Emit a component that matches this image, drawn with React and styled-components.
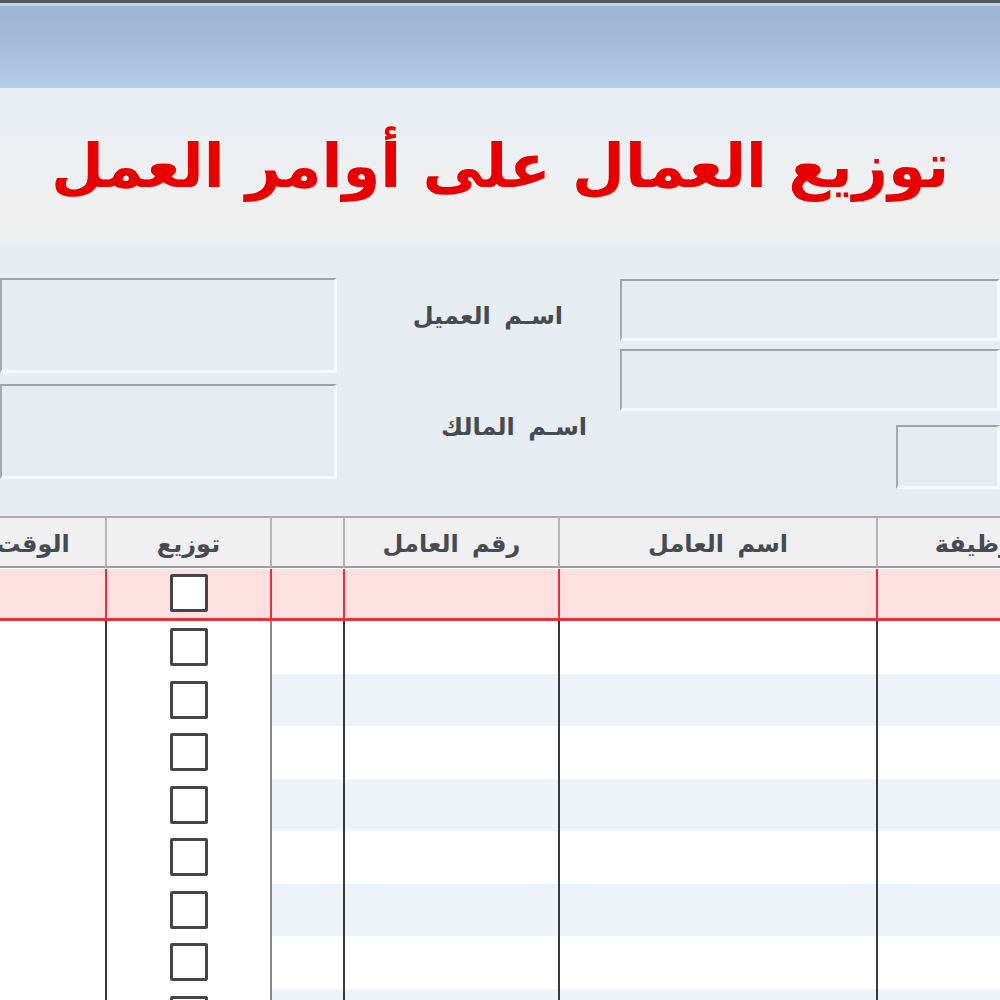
import React from "react";
import styled, { createGlobalStyle } from "styled-components";

const GlobalStyle = createGlobalStyle`
  html, body {
    margin: 0;
    padding: 0;
    background: #ffffff;
  }
  body {
    font-family: "DejaVu Sans", "Noto Sans", sans-serif;
  }
`;

const Frame = styled.div`
  width: 1000px;
  height: 1000px;
  overflow: hidden;
  display: flex;
  flex-direction: column;
  background: #ffffff;
`;

const TopBar = styled.div`
  height: 85px;
  flex-shrink: 0;
  border-top: 3px solid #4b5a5b;
  box-shadow: inset 0 3px 0 #c9d5dd;
  background: linear-gradient(180deg, #9eb3d6 0%, #a2bad4 45%, #b5cde8 100%);
`;

const TitleArea = styled.div`
  height: 162px;
  flex-shrink: 0;
  display: flex;
  align-items: center;
  justify-content: center;
  padding-bottom: 8px;
  box-sizing: border-box;
  background: linear-gradient(180deg, #e7eef4 0%, #f0f0f0 70%, #f0f0f0 88%, #e4eff0 100%);
`;

const Title = styled.h1`
  margin: 0;
  direction: rtl;
  font-family: "DejaVu Sans", sans-serif;
  font-weight: bold;
  font-size: 61px;
  color: #e80000;
  white-space: nowrap;
`;

const Form = styled.div`
  height: 266px;
  flex-shrink: 0;
  display: grid;
  grid-template-columns: 337px 283px 1fr;
  background: #e6edf3;
  direction: ltr;
`;

const Column = styled.div`
  display: flex;
  flex-direction: column;
  gap: ${(p) => p.$gap || 0}px;
  padding-top: ${(p) => p.$top || 0}px;
`;

const Field = styled.div`
  height: ${(p) => p.$h}px;
  margin-left: ${(p) => p.$indent || 0}px;
  margin-top: ${(p) => p.$mt || 0}px;
  box-sizing: border-box;
  background: #e5ecf2;
  border-top: 2px solid #9da3a8;
  border-left: 2px solid #a3a9ae;
  border-bottom: 3px solid #f7fafc;
  border-right: 3px solid #f7fafc;
`;

const Label = styled.div`
  direction: rtl;
  text-align: right;
  font-size: 24px;
  font-weight: bold;
  word-spacing: 5px;
  color: #474b50;
  height: 30px;
  line-height: 30px;
  white-space: nowrap;
  padding-right: ${(p) => p.$pr}px;
  margin-top: ${(p) => p.$mt}px;
`;

const TableWrap = styled.div`
  flex: 1;
  overflow: hidden;
  background: #ffffff;
`;

const Grid = styled.div`
  width: 1150px;
  margin-left: -39px;
  display: grid;
  grid-template-columns: 144px 165px 73px 215px 318px 212px;
  grid-auto-rows: 52.5px;
`;

const HeadCell = styled.div`
  height: 52px;
  box-sizing: border-box;
  background: #f0f0f0;
  border-top: 2px solid #a9abad;
  border-bottom: 2px solid #9c9c9c;
  border-left: ${(p) => (p.$first ? "none" : "2px solid #b4b4b4")};
  display: flex;
  align-items: center;
  justify-content: center;
  direction: rtl;
  font-size: 24px;
  font-weight: bold;
  word-spacing: 5px;
  white-space: nowrap;
  color: #474b50;
  padding-top: 4px;
`;

const Cell = styled.div`
  box-sizing: border-box;
  display: flex;
  align-items: center;
  justify-content: center;
  background: ${(p) =>
    p.$active ? "#fde1e1" : p.$striped ? "#eef3fa" : "#ffffff"};
  border-left: ${(p) => (p.$line ? `2px solid ${p.$line}` : "none")};
  border-bottom: ${(p) => (p.$active ? "3px solid #e8303c" : "none")};
`;

const Box = styled.span`
  width: 32px;
  height: 32px;
  border: 3px solid #464646;
  border-radius: 2px;
  background: #ffffff;
  box-sizing: content-box;
`;

const headers = ["الوقت", "توزيع", "", "رقم العامل", "اسم العامل", "الوظيفة"];
const lines = [null, "#3a3a3a", "#8a8a8a", "#3a3a3a", "#3a3a3a", "#3a3a3a"];

const Row = ({ index }) => {
  const active = index === 0;
  const striped = index % 2 === 0 && !active;
  return headers.map((_, c) => (
    <Cell
      key={c}
      $active={active}
      $striped={striped && c >= 2}
      $line={active && c > 0 ? "#e8303c" : lines[c]}
    >
      {c === 1 && <Box />}
    </Cell>
  ));
};

export default function App() {
  const rows = Array.from({ length: 9 }, (_, i) => i);
  return (
    <>
      <GlobalStyle />
      <Frame>
        <TopBar />
        <TitleArea>
          <Title>توزيع العمال على أوامر العمل</Title>
        </TitleArea>
        <Form>
          <Column $top={28} $gap={11}>
            <Field $h={95} />
            <Field $h={95} />
          </Column>
          <Column>
            <Label $pr={57} $mt={51}>اسـم العميل</Label>
            <Label $pr={33} $mt={81}>اسـم المالك</Label>
          </Column>
          <Column $top={29}>
            <Field $h={62} />
            <Field $h={62} $mt={8} />
            <Field $h={64} $mt={14} $indent={276} />
          </Column>
        </Form>
        <TableWrap>
          <Grid>
            {headers.map((h, i) => (
              <HeadCell key={i} $first={i === 0}>
                {h}
              </HeadCell>
            ))}
            {rows.map((i) => (
              <Row key={i} index={i} />
            ))}
          </Grid>
        </TableWrap>
      </Frame>
    </>
  );
}
